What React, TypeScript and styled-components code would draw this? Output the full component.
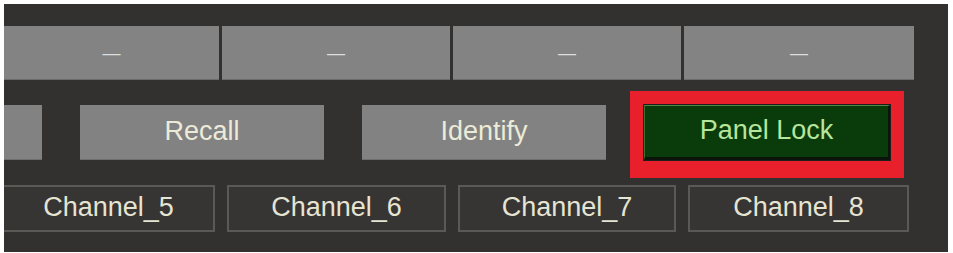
import React from "react";
import styled, { createGlobalStyle } from "styled-components";

const GlobalStyle = createGlobalStyle`
  html, body {
    margin: 0;
    padding: 0;
    background: #ffffff;
  }
  body {
    font-family: "Liberation Sans", Arial, sans-serif;
  }
`;

const Panel = styled.div`
  margin: 4px 5px 0 4px;
  width: 944px;
  height: 248px;
  box-sizing: border-box;
  padding-top: 22px;
  background: #33312f;
  overflow: hidden;
  display: flex;
  flex-direction: column;
  gap: 25px;
`;

const Row = styled.div<{ gap: number; height: number }>`
  display: flex;
  gap: ${(p) => p.gap}px;
  height: ${(p) => p.height}px;
  flex-shrink: 0;
`;

const SlotButton = styled.div<{ w: number }>`
  width: ${(p) => p.w}px;
  flex-shrink: 0;
  background: #838383;
  border-bottom: 1px solid #6c6c6c;
  box-sizing: border-box;
  display: flex;
  align-items: center;
  justify-content: center;
  color: #dedede;
  font-size: 18px;
  padding-top: 1px;
`;

const ActionButton = styled.div<{ w: number }>`
  width: ${(p) => p.w}px;
  flex-shrink: 0;
  background: #828282;
  box-sizing: border-box;
  border-bottom: 1px solid #6e6e6e;
  display: flex;
  align-items: center;
  justify-content: center;
  color: #ecebd8;
  font-size: 27px;
  padding-bottom: 2px;
`;

const LockButton = styled.div<{ w: number }>`
  width: ${(p) => p.w}px;
  flex-shrink: 0;
  background: #093c0a;
  box-sizing: border-box;
  border-top: 1px solid #4f8a45;
  border-left: 1px solid #3b6e35;
  border-right: 2px solid #0b140b;
  border-bottom: 3px solid #0b140b;
  display: flex;
  align-items: center;
  justify-content: center;
  color: #b7e59c;
  font-size: 27px;
  padding-bottom: 2px;
  outline: 13px solid #e8202b;
  outline-offset: 1px;
  box-shadow: 0 0 0 1px #1f1e1c, 0 4px 0 14px #e8202b;
`;

const ChannelButton = styled.div<{ w: number; cut?: boolean }>`
  width: ${(p) => p.w}px;
  flex-shrink: 0;
  background: #373533;
  border: 2px solid #5b5956;
  border-left-width: ${(p) => (p.cut ? 0 : 2)}px;
  box-sizing: border-box;
  display: flex;
  align-items: center;
  justify-content: center;
  color: #e6e4d3;
  font-size: 27px;
  padding-bottom: 3px;
`;

const slots = [215, 228, 228, 230];
const channels = [
  { name: "Channel_5", w: 211 },
  { name: "Channel_6", w: 219 },
  { name: "Channel_7", w: 218 },
  { name: "Channel_8", w: 221 },
];

export default function App() {
  return (
    <>
      <GlobalStyle />
      <Panel>
        <Row gap={3} height={54}>
          {slots.map((w, i) => (
            <SlotButton key={i} w={w}>
              —
            </SlotButton>
          ))}
        </Row>
        <Row gap={38} height={55}>
          <ActionButton w={38} />
          <ActionButton w={244}>Recall</ActionButton>
          <ActionButton w={244}>Identify</ActionButton>
          <LockButton w={246}>Panel Lock</LockButton>
        </Row>
        <Row gap={12} height={47}>
          {channels.map((c, i) => (
            <ChannelButton key={c.name} w={c.w} cut={i === 0}>
              {c.name}
            </ChannelButton>
          ))}
        </Row>
      </Panel>
    </>
  );
}
